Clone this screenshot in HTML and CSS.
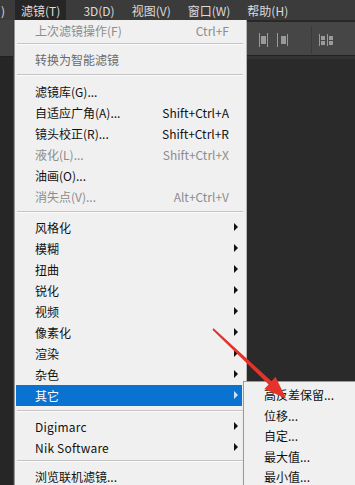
FILE: index.html
```html
<!DOCTYPE html>
<html>
<head>
	<meta charset="utf-8">
	<title>滤镜菜单</title>
	<link rel="stylesheet" href="styles.css">
</head>
<body>
  <div class="menubar">
    <span class="top-item cut">)</span>
    <span class="top-item active">滤镜(T)</span>
    <span class="top-item">3D(D)</span>
    <span class="top-item">视图(V)</span>
    <span class="top-item">窗口(W)</span>
    <span class="top-item">帮助(H)</span>
  </div>

  <div class="workspace">
    <div class="left-strip">
      <div class="left-tool"></div>
    </div>

    <div class="menu">
      <div class="item disabled"><span class="label">上次滤镜操作(F)</span><span class="key">Ctrl+F</span><span class="arrow"></span></div>
      <div class="sep sep-a"></div>
      <div class="item dim"><span class="label">转换为智能滤镜</span><span class="key"></span><span class="arrow"></span></div>
      <div class="sep"></div>
      <div class="item"><span class="label">滤镜库(G)...</span><span class="key"></span><span class="arrow"></span></div>
      <div class="item"><span class="label">自适应广角(A)...</span><span class="key">Shift+Ctrl+A</span><span class="arrow"></span></div>
      <div class="item"><span class="label">镜头校正(R)...</span><span class="key">Shift+Ctrl+R</span><span class="arrow"></span></div>
      <div class="item disabled"><span class="label">液化(L)...</span><span class="key">Shift+Ctrl+X</span><span class="arrow"></span></div>
      <div class="item"><span class="label">油画(O)...</span><span class="key"></span><span class="arrow"></span></div>
      <div class="item disabled"><span class="label">消失点(V)...</span><span class="key">Alt+Ctrl+V</span><span class="arrow"></span></div>
      <div class="sep sep-b"></div>
      <div class="item"><span class="label">风格化</span><span class="key"></span><span class="arrow sub"></span></div>
      <div class="item"><span class="label">模糊</span><span class="key"></span><span class="arrow sub"></span></div>
      <div class="item"><span class="label">扭曲</span><span class="key"></span><span class="arrow sub"></span></div>
      <div class="item"><span class="label">锐化</span><span class="key"></span><span class="arrow sub"></span></div>
      <div class="item"><span class="label">视频</span><span class="key"></span><span class="arrow sub"></span></div>
      <div class="item"><span class="label">像素化</span><span class="key"></span><span class="arrow sub"></span></div>
      <div class="item"><span class="label">渲染</span><span class="key"></span><span class="arrow sub"></span></div>
      <div class="item"><span class="label">杂色</span><span class="key"></span><span class="arrow sub"></span></div>
      <div class="item selected"><span class="label">其它</span><span class="key"></span><span class="arrow sub"></span></div>
      <div class="sep sep-b"></div>
      <div class="item"><span class="label latin">Digimarc</span><span class="key"></span><span class="arrow sub"></span></div>
      <div class="item"><span class="label latin">Nik Software</span><span class="key"></span><span class="arrow sub"></span></div>
      <div class="sep sep-a"></div>
      <div class="item"><span class="label">浏览联机滤镜...</span><span class="key"></span><span class="arrow"></span></div>
    </div>

    <div class="right-area">
      <div class="toolbar">
        <svg class="tool-icons" width="108" height="33" viewBox="0 0 108 33">
          <g fill="#9a9a9a">
            <rect x="12" y="11" width="1" height="14"/>
            <rect x="14" y="14" width="5" height="8"/>
            <rect x="20" y="11" width="1" height="14"/>
            <rect x="30" y="11" width="1" height="14"/>
            <rect x="34" y="14" width="5" height="8"/>
            <rect x="40" y="12" width="1" height="12"/>
            <rect x="72" y="12" width="1" height="12"/>
            <rect x="74" y="14" width="4" height="4"/>
            <rect x="74" y="19" width="4" height="4"/>
            <rect x="80" y="12" width="1" height="12"/>
            <rect x="82" y="14" width="4" height="4"/>
            <rect x="82" y="19" width="4" height="4"/>
          </g>
          <rect x="64" y="4" width="1" height="28" fill="#3a3a3a"/>
        </svg>
      </div>
      <div class="canvas"></div>
    </div>
  </div>

  <div class="submenu">
    <div class="sub-item">高反差保留...</div>
    <div class="sub-item">位移...</div>
    <div class="sub-item">自定...</div>
    <div class="sub-item">最大值...</div>
    <div class="sub-item">最小值...</div>
  </div>

  <svg class="pointer" width="355" height="485" viewBox="0 0 355 485">
    <polygon fill="#e3332b" points="212.4,329.7 213.6,328.3 271.5,381.3 275.5,376.8 286,398.5 264.3,389 268.6,384.4"/>
  </svg>
</body>
</html>
```

FILE: styles.css
```css
body {
	margin: 0;
	width: 355px;
	height: 485px;
	overflow: hidden;
	background: #282828;
	font-family: "Noto Sans CJK SC", "Noto Sans", sans-serif;
	font-size: 12px;
	position: relative;
}
.menubar {
	height: 20px;
	background: #3b3b3b;
	display: flex;
	align-items: stretch;
	color: #dcdcdc;
}
.top-item {
	display: flex;
	align-items: center;
	padding: 0 8px;
	margin-right: 1px;
}
.top-item.cut {
	padding: 0 9px 0 1px;
}
.top-item.active {
	background: #262626;
	padding: 0 6px;
	margin-right: 9px;
}
.workspace {
	display: flex;
	height: 465px;
}
.left-strip {
	width: 13px;
	background: #262626;
	border-right: 1px solid #3c3c3c;
}
.left-tool {
	height: 36px;
	background: #424242;
	border-bottom: 1px solid #202020;
}
.menu {
	width: 226px;
	background: #f0f0f0;
	border-left: 1px solid #979797;
	border-right: 1px solid #b5b5b5;
	padding: 0 4px 0 1px;
}
.item {
	display: flex;
	align-items: center;
	height: 21px;
	color: #111;
	padding-left: 19px;
}
.label {
	flex: 1;
	white-space: nowrap;
	margin-top: -1px;
}
.latin {
	letter-spacing: 0.2px;
}
.key {
	white-space: nowrap;
	margin-top: -1px;
}
.arrow {
	width: 13px;
	height: 21px;
	flex: none;
	position: relative;
}
.arrow.sub::after {
	content: "";
	position: absolute;
	left: 5px;
	top: 6px;
	border-left: 4px solid #111;
	border-top: 4px solid transparent;
	border-bottom: 4px solid transparent;
}
.item.disabled {
	color: #8c8c8c;
}
.item.dim {
	color: #6a6a6a;
}
.item.selected {
	background: #0a72d0;
	color: #fff;
}
.item.selected .arrow.sub::after {
	border-left-color: #cfe4f7;
}
.sep {
	height: 11px;
	position: relative;
}
.sep::after {
	content: "";
	position: absolute;
	left: 1px;
	right: -1px;
	top: 4px;
	height: 1px;
	background: #c4c4c4;
	border-bottom: 1px solid #fbfbfb;
}
.sep-b {
	height: 10px;
}
.sep-a {
	height: 8px;
}
.sep-a::after {
	top: 2px;
}
.right-area {
	flex: 1;
	display: flex;
	flex-direction: column;
}
.toolbar {
	height: 33px;
	margin-top: 2px;
	background: #464646;
	border-bottom: 1px solid #232323;
}
.tool-icons {
	display: block;
}
.canvas {
	flex: 1;
	background: #2a2a2a;
	border-top: 3px solid #333;
}
.submenu {
	position: absolute;
	left: 243px;
	top: 381px;
	width: 120px;
	height: 120px;
	background: #f0f0f0;
	border: 1px solid #9a9a9a;
	box-shadow: 2px 2px 3px rgba(0, 0, 0, 0.35);
	padding-top: 3px;
}
.sub-item {
	height: 20.6px;
	line-height: 20px;
	padding-left: 20px;
	color: #111;
}
.pointer {
	position: absolute;
	left: 0;
	top: 0;
}
```
